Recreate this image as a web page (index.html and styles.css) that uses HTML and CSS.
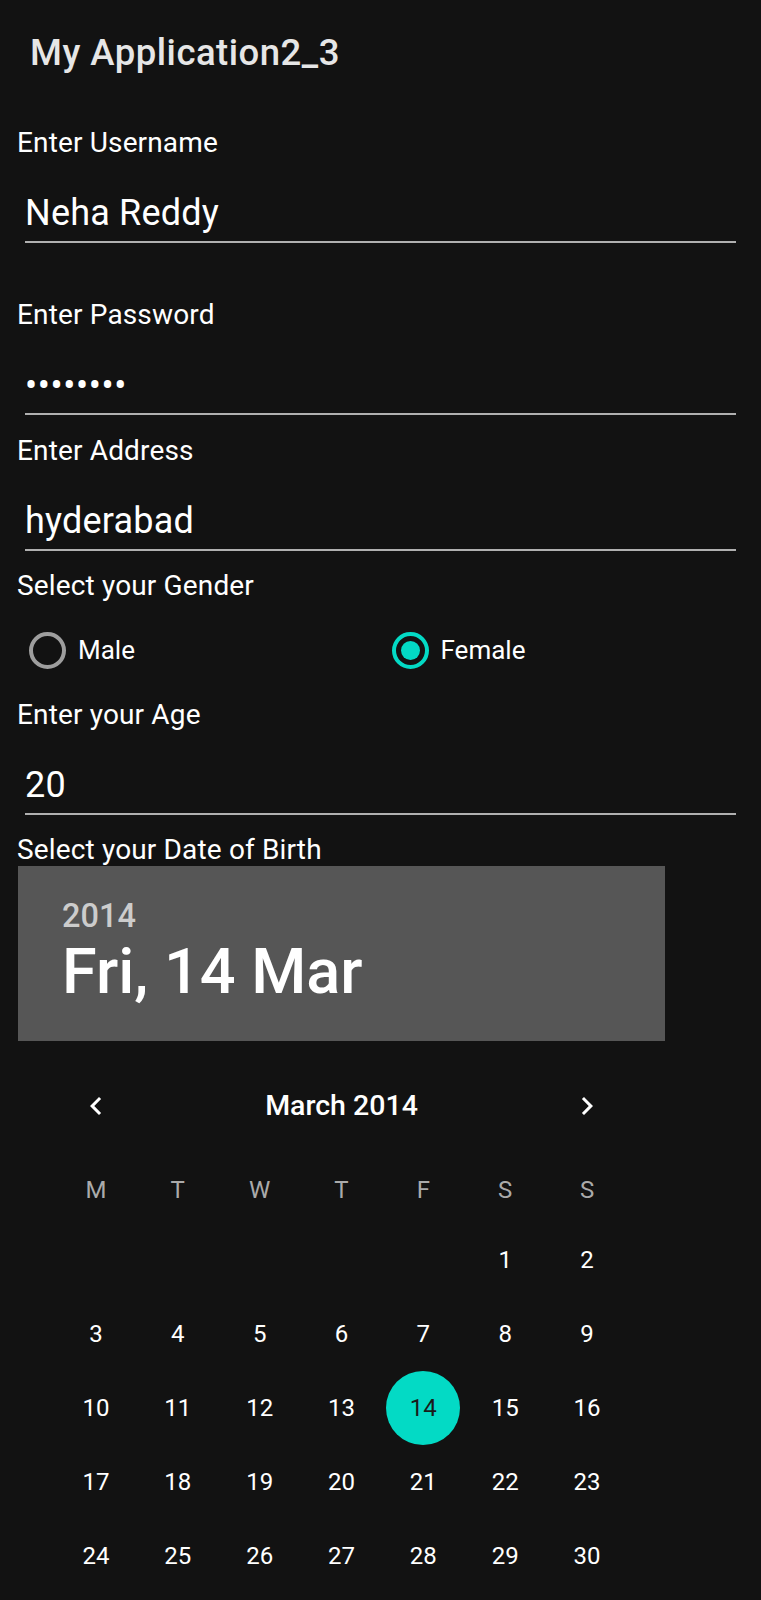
FILE: index.html
```html
<!DOCTYPE html>
<html lang="en">
<head>
<meta charset="utf-8">
<title>My Application2_3</title>
<link rel="stylesheet" href="styles.css">
</head>
<body>
<div class="app">
  <header class="title">My Application2_3</header>
  <main class="form">
    <div class="label l-user">Enter Username</div>
    <div class="field">Neha Reddy</div>

    <div class="label l-pass">Enter Password</div>
    <div class="field pass">••••••••</div>

    <div class="label l-addr">Enter Address</div>
    <div class="field">hyderabad</div>

    <div class="label l-gender">Select your Gender</div>
    <div class="radios">
      <div class="radio"><span class="ring"></span><span class="rtext">Male</span></div>
      <div class="radio checked"><span class="ring"><span class="dot"></span></span><span class="rtext">Female</span></div>
    </div>

    <div class="label l-age">Enter your Age</div>
    <div class="field">20</div>

    <div class="label l-dob">Select your Date of Birth</div>
    <section class="picker">
      <div class="pk-head">
        <div class="pk-year">2014</div>
        <div class="pk-date">Fri, 14 Mar</div>
      </div>
      <div class="cal">
        <div class="cal-nav">
          <span class="chev">
            <svg width="36" height="36" viewBox="0 0 24 24"><path fill="#ffffff" d="M15.41 7.41L14 6l-6 6 6 6 1.41-1.41L10.83 12z"/></svg>
          </span>
          <span class="month">March 2014</span>
          <span class="chev">
            <svg width="36" height="36" viewBox="0 0 24 24"><path fill="#ffffff" d="M10 6L8.59 7.41 13.17 12l-4.58 4.59L10 18l6-6z"/></svg>
          </span>
        </div>
        <div class="week">
          <span>M</span><span>T</span><span>W</span><span>T</span><span>F</span><span>S</span><span>S</span>
        </div>
        <div class="days">
          <span></span><span></span><span></span><span></span><span></span><span>1</span><span>2</span>
          <span>3</span><span>4</span><span>5</span><span>6</span><span>7</span><span>8</span><span>9</span>
          <span>10</span><span>11</span><span>12</span><span>13</span><span class="sel"><b>14</b></span><span>15</span><span>16</span>
          <span>17</span><span>18</span><span>19</span><span>20</span><span>21</span><span>22</span><span>23</span>
          <span>24</span><span>25</span><span>26</span><span>27</span><span>28</span><span>29</span><span>30</span>
        </div>
      </div>
    </section>
  </main>
</div>
</body>
</html>
```
FILE: styles.css
```css
* { box-sizing: border-box; }
html, body {
  margin: 0;
  padding: 0;
  background: #121212;
}
body {
  font-family: Roboto, "Noto Sans", "Liberation Sans", sans-serif;
  color: #ffffff;
  width: 761px;
  height: 1600px;
  overflow: hidden;
}
.title {
  margin-top: 29px;
  padding-left: 30px;
  font-size: 36.5px;
  line-height: 48px;
  font-weight: 500;
  letter-spacing: 0.5px;
  color: #e6e6e6;
}
.form {
  display: flex;
  flex-direction: column;
}
.label {
  padding-left: 17px;
  font-size: 28px;
  line-height: 36px;
  letter-spacing: 0.15px;
  color: #ffffff;
}
.l-user { margin-top: 48px; }
.l-pass { margin-top: 54px; }
.l-addr { margin-top: 18px; }
.l-gender { margin-top: 17px; }
.l-age { margin-top: 19px; }
.l-dob { margin-top: 17px; }

.field {
  margin: 28px 25px 0 25px;
  font-size: 36px;
  line-height: 48px;
  padding-bottom: 4px;
  border-bottom: 2px solid #b0b0b0;
  color: #ffffff;
  letter-spacing: 0.2px;
}
.field.pass {
  letter-spacing: 0.6px;
  padding-top: 2px;
  line-height: 46px;
}

.radios {
  margin: 18px 18px 0 18px;
  height: 56px;
  display: grid;
  grid-template-columns: 1fr 1fr;
}
.radio {
  display: flex;
  align-items: center;
  padding-left: 11px;
  gap: 12px;
}
.ring {
  width: 37px;
  height: 37px;
  border-radius: 50%;
  border: 4px solid #9e9e9e;
  display: flex;
  align-items: center;
  justify-content: center;
}
.checked .ring { border-color: #03dac5; }
.dot {
  width: 19px;
  height: 19px;
  border-radius: 50%;
  background: #03dac5;
}
.rtext {
  font-size: 26px;
  line-height: 36px;
  color: #ffffff;
}

.picker {
  margin-left: 18px;
  margin-top: -2px;
  width: 647px;
}
.pk-head {
  height: 175px;
  background: #565656;
  padding: 30px 0 0 44px;
}
.pk-year {
  font-size: 32.5px;
  line-height: 40px;
  font-weight: 500;
  color: #cccccc;
}
.pk-date {
  font-size: 63px;
  line-height: 72px;
  font-weight: 500;
  color: #ffffff;
}
.cal {
  padding: 0 37px;
  margin-top: 28px;
}
.cal-nav {
  display: grid;
  grid-template-columns: repeat(7, 1fr);
  height: 74px;
  align-items: center;
}
.chev {
  display: flex;
  justify-content: center;
  align-items: center;
}
.chev svg { display: block; }
.month {
  grid-column: 2 / 7;
  text-align: center;
  font-size: 28.5px;
  line-height: 74px;
  font-weight: 500;
  color: #ffffff;
}
.week {
  margin-top: 14px;
  display: grid;
  grid-template-columns: repeat(7, 1fr);
  height: 66px;
}
.week span {
  text-align: center;
  font-size: 24px;
  line-height: 66px;
  color: #aaaaaa;
}
.days {
  display: grid;
  grid-template-columns: repeat(7, 1fr);
  grid-auto-rows: 74px;
}
.days span {
  display: flex;
  align-items: center;
  justify-content: center;
  font-size: 24px;
  color: #ffffff;
}
.days .sel b {
  width: 74px;
  height: 74px;
  border-radius: 50%;
  background: #03dac5;
  color: #1a1a1a;
  font-weight: 400;
  display: flex;
  align-items: center;
  justify-content: center;
}
```
